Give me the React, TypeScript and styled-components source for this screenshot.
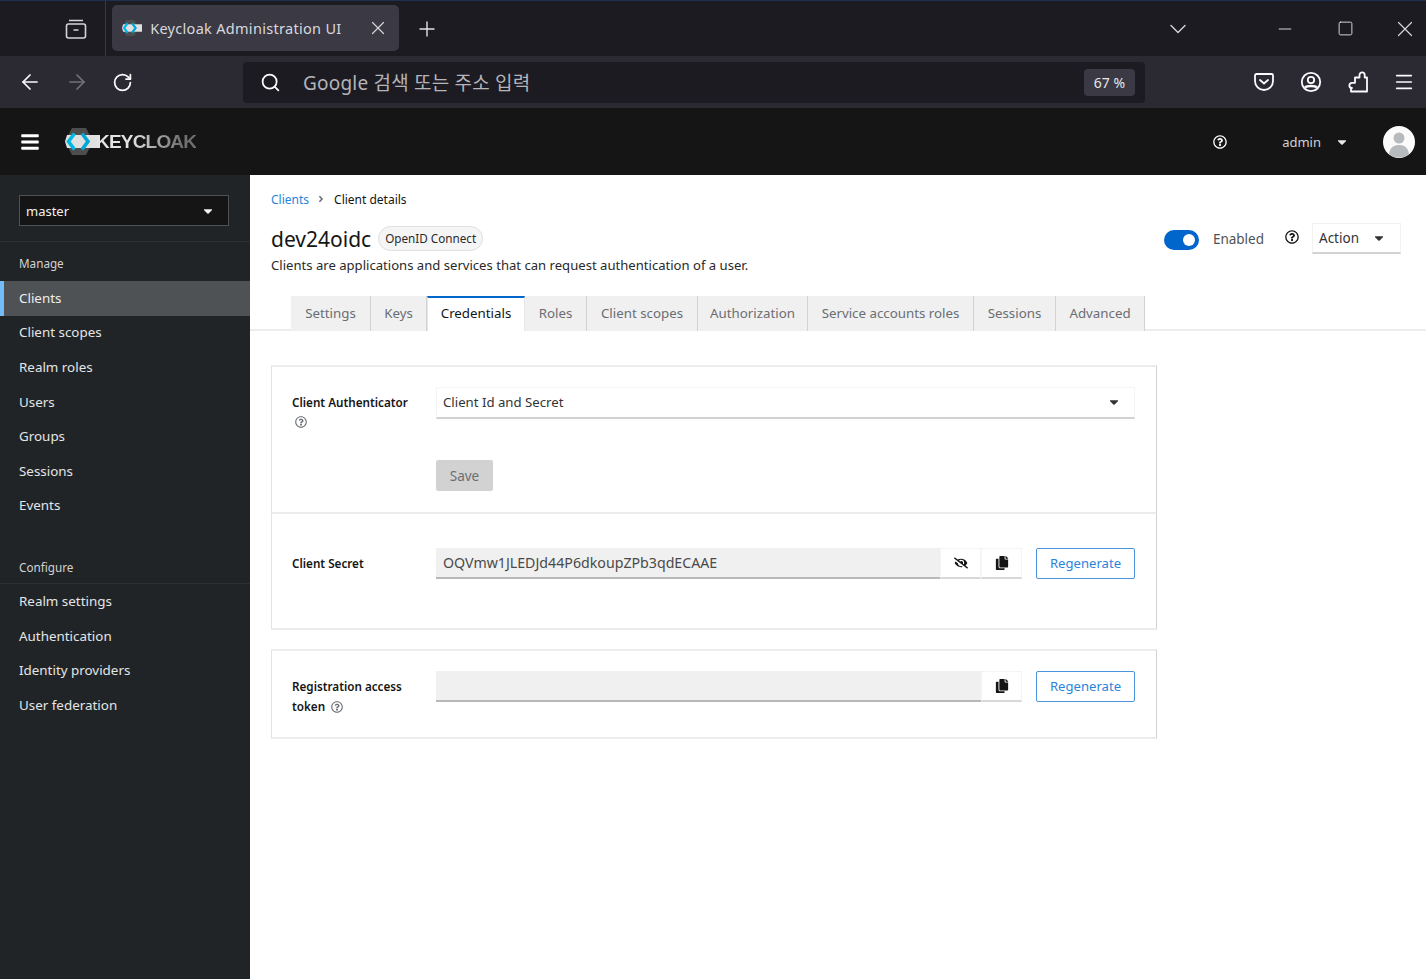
import React from "react";
import styled, { createGlobalStyle } from "styled-components";
import { ArrowLeft, ArrowRight, RotateCw, Search, X, Plus, ChevronDown, Minus, Square, Menu } from "lucide-react";
import { FaBars, FaCaretDown, FaAngleRight, FaRegQuestionCircle, FaEyeSlash, FaCopy } from "react-icons/fa";

const FONT = `"Noto Sans", "Noto Sans CJK KR", sans-serif`;

const GlobalStyle = createGlobalStyle`
  html, body { margin: 0; padding: 0; background: #fff; }
  body { font-family: ${FONT}; overflow: hidden; }
  * { box-sizing: border-box; }
`;

const Page = styled.div`
  width: 1426px;
  height: 979px;
  display: flex;
  flex-direction: column;
  overflow: hidden;
`;

/* browser chrome */
const TabStrip = styled.div`
  height: 56px;
  background: #1c1b22;
  border-top: 1px solid #20304f;
  display: flex;
  align-items: center;
  color: #fbfbfe;
`;
const TabGroupButton = styled.div`
  width: 106px;
  height: 55px;
  padding-left: 65px;
  display: flex;
  align-items: center;
  border-right: 1px solid #3a3944;
`;
const BrowserTab = styled.div`
  width: 287px;
  height: 46px;
  margin: 0 0 2px 6px;
  padding: 0 10px 0 10px;
  border-radius: 5px;
  background: #3a3944;
  display: flex;
  align-items: center;
  color: #d8d8dc;
  font-size: 14.5px;
  letter-spacing: 0.3px;
`;
const TabTitle = styled.span`
  margin-left: 8px;
  flex: 1;
  white-space: nowrap;
`;
const NewTab = styled.div`
  margin-left: 16px;
  display: flex;
`;
const StripRight = styled.div`
  margin-left: auto;
  margin-right: -9px;
  display: flex;
  align-items: center;
  color: #d5d5d8;
`;
const AllTabs = styled.div`
  display: flex;
  margin-right: 63px;
`;
const WindowButton = styled.div`
  width: 60px;
  display: flex;
  justify-content: center;
`;
const Toolbar = styled.div`
  height: 52px;
  background: #2b2a33;
  display: flex;
  align-items: center;
  padding-left: 18px;
  color: #fbfbfe;
`;
const NavButton = styled.div<{ $off?: boolean }>`
  width: 47px;
  display: flex;
  color: ${(p) => (p.$off ? "#73727a" : "#fbfbfe")};
`;
const UrlBar = styled.div`
  width: 902px;
  height: 41px;
  margin-left: 84px;
  padding: 0 10px 0 17px;
  border-radius: 4px;
  background: #1c1b22;
  display: flex;
  align-items: center;
`;
const UrlText = styled.span`
  margin-left: 22px;
  flex: 1;
  color: #b4b4ba;
  font-size: 19px;
  letter-spacing: 0.2px;
`;
const Zoom = styled.span`
  width: 51px;
  height: 27px;
  border-radius: 4px;
  background: #3a3944;
  color: #e6e6ea;
  font-size: 14px;
  display: flex;
  align-items: center;
  justify-content: center;
`;
const ToolIcons = styled.div`
  margin-left: 107px;
  display: flex;
  align-items: center;
  gap: 23px;
`;

/* keycloak masthead */
const Masthead = styled.header`
  height: 67px;
  background: #151515;
  display: flex;
  align-items: center;
  padding: 0 11px 0 20px;
  color: #fff;
`;
const BarsIcon = styled(FaBars)`
  width: 20px;
  height: 20px;
`;
const Logo = styled.div`
  margin-left: 25px;
  display: flex;
  align-items: center;
`;
const LogoText = styled.span`
  margin-left: -3px;
  font-family: "Liberation Sans", sans-serif;
  font-size: 19px;
  font-weight: 700;
  letter-spacing: -0.8px;
  background: linear-gradient(90deg, #e4e4e4 35%, #6f6f6f 85%);
  -webkit-background-clip: text;
  background-clip: text;
  color: transparent;
`;
const MastRight = styled.div`
  margin-left: auto;
  display: flex;
  align-items: center;
`;
const MastHelp = styled(FaRegQuestionCircle)`
  width: 14px;
  height: 14px;
  margin-right: 55px;
`;
const UserName = styled.span`
  color: #d2d2d2;
  font-size: 13px;
`;
const UserCaret = styled(FaCaretDown)`
  width: 14px;
  height: 14px;
  margin: 0 34px 0 14px;
  color: #e8e8e8;
`;
const Avatar = styled.svg`
  width: 32px;
  height: 32px;
  display: block;
`;

const Body = styled.div`
  flex: 1;
  display: flex;
  min-height: 0;
`;

/* sidebar */
const Sidebar = styled.aside`
  width: 250px;
  background: #212427;
  color: #e4e5e6;
  display: flex;
  flex-direction: column;
`;
const RealmWrap = styled.div`
  height: 67px;
  padding: 20px 21px 0 19px;
  border-bottom: 1px solid #2d3033;
`;
const RealmSelect = styled.div`
  height: 31px;
  padding: 0 13px 0 6px;
  background: #151515;
  border: 1px solid #4f5255;
  display: flex;
  align-items: center;
  justify-content: space-between;
  font-size: 13px;
  color: #f0f0f0;
`;
const SectionTitle = styled.div<{ $gap: number; $ruled?: boolean }>`
  height: ${(p) => (p.$ruled ? 30 : 39)}px;
  margin-top: ${(p) => p.$gap}px;
  padding: ${(p) => (p.$ruled ? "4px" : "12px")} 0 0 19px;
  font-size: 11.7px;
  line-height: 18px;
  color: #d2d2d2;
  border-bottom: ${(p) => (p.$ruled ? "1px solid #2d3033" : "none")};
`;
const NavItem = styled.div<{ $active?: boolean }>`
  height: 34.6px;
  padding-bottom: 1px;
  display: flex;
  align-items: center;
  padding-left: ${(p) => (p.$active ? 15 : 19)}px;
  font-size: 13.4px;
  color: ${(p) => (p.$active ? "#eeeeee" : "#e4e5e6")};
  background: ${(p) => (p.$active ? "#4f5255" : "transparent")};
  border-left: ${(p) => (p.$active ? "4px solid #73bcf7" : "none")};
`;

/* main */
const Main = styled.main`
  flex: 1;
  background: #fff;
  color: #151515;
  display: flex;
  flex-direction: column;
`;
const Header = styled.div`
  padding: 15px 25px 0 21px;
`;
const Breadcrumb = styled.nav`
  height: 18px;
  display: flex;
  align-items: center;
  font-size: 12px;
`;
const CrumbLink = styled.span`
  color: #2b84dc;
`;
const CrumbSep = styled(FaAngleRight)`
  width: 10px;
  height: 10px;
  margin: 0 8px 0 7px;
  color: #6a6e73;
`;
const TitleRow = styled.div`
  margin-top: 16px;
  height: 30px;
  display: flex;
  align-items: center;
`;
const Title = styled.h1`
  margin: 0;
  font-size: 21px;
  font-weight: 400;
`;
const Chip = styled.span`
  margin: -2px 0 0 7px;
  height: 25px;
  padding: 0 6px;
  border: 1px solid #e0e0e0;
  border-radius: 13px;
  background: #f5f5f5;
  color: #2a2a2a;
  font-size: 11.7px;
  display: flex;
  align-items: center;
`;
const HeaderActions = styled.div`
  margin-left: auto;
  display: flex;
  align-items: center;
`;
const Toggle = styled.span`
  width: 35px;
  height: 20px;
  margin-top: 2px;
  padding-right: 4px;
  border-radius: 10px;
  background: #0066cc;
  display: flex;
  align-items: center;
  justify-content: flex-end;
  &::after {
    content: "";
    width: 12px;
    height: 12px;
    border-radius: 50%;
    background: #fff;
  }
`;
const ToggleLabel = styled.span`
  margin: 0 21px 0 14px;
  color: #4f5255;
  font-size: 13.5px;
`;
const ActionHelp = styled(FaRegQuestionCircle)`
  width: 14px;
  height: 14px;
  margin: -5px 13px 0 0;
`;
const ActionSelect = styled.div`
  width: 89px;
  height: 31px;
  padding: 0 14px 0 6px;
  margin-top: -2px;
  display: flex;
  align-items: center;
  justify-content: space-between;
  font-size: 13.5px;
  color: #333;
  border: 1px solid #f2f2f2;
  border-bottom: 2px solid #d2d2d2;
`;
const Description = styled.p`
  margin: 1px 0 0;
  height: 20px;
  font-size: 13.1px;
  line-height: 20px;
  color: #2a2a2a;
`;
const Tabs = styled.div`
  margin-top: 21px;
  height: 35px;
  padding-left: 41px;
  display: flex;
  border-bottom: 2px solid #ececec;
`;
const Tab = styled.div<{ $w: number; $active?: boolean }>`
  width: ${(p) => p.$w}px;
  height: 35px;
  padding-bottom: ${(p) => (p.$active ? 3 : 1)}px;
  display: flex;
  align-items: center;
  justify-content: center;
  font-size: 13.3px;
  color: ${(p) => (p.$active ? "#151515" : "#6a6e73")};
  background: ${(p) => (p.$active ? "#fff" : "#f0f0f0")};
  border-right: 1px solid ${(p) => (p.$active ? "#e6e6e6" : "#d2d2d2")};
  border-left: ${(p) => (p.$active ? "1px solid #e6e6e6" : "none")};
  border-top: ${(p) => (p.$active ? "2px solid #0066cc" : "none")};
`;
const Cards = styled.div`
  width: 886px;
  margin: 34px 0 0 21px;
  display: flex;
  flex-direction: column;
`;
const Card = styled.section<{ $h: number; $top?: number; $noTop?: boolean }>`
  height: ${(p) => p.$h}px;
  margin-top: ${(p) => p.$top ?? 0}px;
  padding: 20px 21px 0 20px;
  display: grid;
  grid-template-columns: 144px 1fr;
  align-content: start;
  border: 1px solid #e4e4e4;
  border-top: ${(p) => (p.$noTop ? "none" : "2px solid #ececec")};
  border-right: 1px solid #d2d2d2;
  border-bottom: 2px solid #ececec;
`;
const Label = styled.div<{ $top: number }>`
  margin-top: ${(p) => p.$top}px;
  font-size: 11.7px;
  line-height: 20px;
  font-weight: 600;
  color: #151515;
`;
const LabelHelp = styled(FaRegQuestionCircle)<{ $block?: boolean }>`
  width: 12px;
  height: 12px;
  color: #6a6e73;
  display: ${(p) => (p.$block ? "block" : "inline-block")};
  margin: ${(p) => (p.$block ? "4px 0 0 3px" : "0 0 -2px 6px")};
`;
const Select = styled.div`
  height: 32px;
  padding: 0 13px 2px 6px;
  display: flex;
  align-items: center;
  justify-content: space-between;
  font-size: 13.2px;
  color: #333;
  border: 1px solid #f4f4f4;
  border-bottom: 2px solid #d2d2d2;
`;
const SaveButton = styled.div`
  grid-column: 2;
  width: 57px;
  height: 31px;
  margin-top: 32px;
  border-radius: 2px;
  background: #d2d2d2;
  color: #6a6e73;
  font-size: 13.5px;
  display: flex;
  align-items: center;
  justify-content: center;
`;
const FieldRow = styled.div<{ $offset: number }>`
  display: flex;
  margin-top: ${(p) => p.$offset}px;
`;
const FieldGroup = styled.div`
  width: 586px;
  height: 31px;
  display: flex;
  margin-right: 14px;
`;
const FieldInput = styled.div`
  flex: 1;
  padding: 0 0 1px 7px;
  display: flex;
  align-items: center;
  background: #f0f0f0;
  border-bottom: 2px solid #b8b8b8;
  color: #4a4a4a;
  font-size: 14.2px;
`;
const IconButton = styled.div`
  width: 41px;
  display: flex;
  align-items: center;
  justify-content: center;
  color: #151515;
  border: 1px solid #f4f4f4;
  border-bottom: 2px solid #d8d8d8;
`;
const OutlineButton = styled.div`
  width: 99px;
  height: 31px;
  padding-bottom: 2px;
  border: 1px solid #4a94dc;
  border-radius: 2px;
  color: #2b84dc;
  font-size: 13.1px;
  display: flex;
  align-items: center;
  justify-content: center;
`;

const KeycloakMark: React.FC<{ size: number }> = ({ size }) => (
  <svg width={(size * 34) / 27} height={size} viewBox="0 0 34 27" fill="none">
    <path d="M0 13.5L7 0h14l7 13.5L21 27H7z" fill="#4d4d4d" />
    <path d="M2 7h32v13H2L0 13.5z" fill="#e0e0e0" />
    <path d="M9.5 5.5L3.5 13.5l6 8" stroke="#00b8e3" strokeWidth="3.6" />
    <path d="M17 5.5l6 8-6 8" stroke="#00a6d6" strokeWidth="3.6" />
  </svg>
);

const navManage = ["Clients", "Client scopes", "Realm roles", "Users", "Groups", "Sessions", "Events"];
const navConfigure = ["Realm settings", "Authentication", "Identity providers", "User federation"];
const tabs: [string, number][] = [
  ["Settings", 80], ["Keys", 56], ["Credentials", 98], ["Roles", 62], ["Client scopes", 111],
  ["Authorization", 110], ["Service accounts roles", 166], ["Sessions", 82], ["Advanced", 89],
];

const App: React.FC = () => (
  <Page>
    <GlobalStyle />
    <TabStrip>
      <TabGroupButton>
        <svg width="22" height="22" viewBox="0 0 22 22" fill="none" stroke="#d5d5d8" strokeWidth="1.6">
          <rect x="1.5" y="6" width="19" height="14" rx="2" />
          <path d="M4 2.5h14M8.5 12h5" />
        </svg>
      </TabGroupButton>
      <BrowserTab>
        <KeycloakMark size={16} />
        <TabTitle>Keycloak Administration UI</TabTitle>
        <X size={22} strokeWidth={1.3} color="#d5d5d8" />
      </BrowserTab>
      <NewTab><Plus size={24} strokeWidth={1.4} color="#e4e4e6" /></NewTab>
      <StripRight>
        <AllTabs><ChevronDown size={28} strokeWidth={1.2} /></AllTabs>
        <WindowButton><Minus size={20} strokeWidth={1.2} /></WindowButton>
        <WindowButton><Square size={17} strokeWidth={1.4} /></WindowButton>
        <WindowButton><X size={26} strokeWidth={1.1} /></WindowButton>
      </StripRight>
    </TabStrip>
    <Toolbar>
      <NavButton><ArrowLeft size={24} strokeWidth={1.7} /></NavButton>
      <NavButton $off><ArrowRight size={24} strokeWidth={1.7} /></NavButton>
      <NavButton><RotateCw size={21} strokeWidth={2} /></NavButton>
      <UrlBar>
        <Search size={21} strokeWidth={2} color="#fbfbfe" />
        <UrlText>Google 검색 또는 주소 입력</UrlText>
        <Zoom>67 %</Zoom>
      </UrlBar>
      <ToolIcons>
        <svg width="24" height="24" viewBox="0 0 24 24" fill="none" stroke="#fbfbfe" strokeWidth="1.8">
          <path d="M4.5 4h15A1.5 1.5 0 0 1 21 5.5V11a9 9 0 0 1-18 0V5.5A1.5 1.5 0 0 1 4.5 4z" />
          <path d="M8 10l4 3.5 4-3.5" strokeLinecap="round" />
        </svg>
        <svg width="24" height="24" viewBox="0 0 24 24" fill="none" stroke="#fbfbfe" strokeWidth="1.8">
          <circle cx="12" cy="12" r="9.2" />
          <circle cx="12" cy="10" r="3.2" />
          <path d="M6 17.5c2-2 10-2 12 0" strokeWidth="2.4" />
        </svg>
        <svg width="24" height="24" viewBox="0 0 24 24" fill="none" stroke="#fbfbfe" strokeWidth="1.8" strokeLinejoin="round">
          <path d="M9 7.5h4.5V5a2.6 2.6 0 0 1 5.2 0v2.5H21v14H5V18h1a2.6 2.6 0 0 1 0-5.2h3z" />
        </svg>
        <Menu size={22} strokeWidth={1.8} />
      </ToolIcons>
    </Toolbar>
    <Masthead>
      <BarsIcon />
      <Logo>
        <KeycloakMark size={27} />
        <LogoText>KEYCLOAK</LogoText>
      </Logo>
      <MastRight>
        <MastHelp />
        <UserName>admin</UserName>
        <UserCaret />
        <Avatar viewBox="0 0 32 32">
          <circle cx="16" cy="16" r="16" fill="#fbfbfb" />
          <circle cx="16" cy="12" r="5.5" fill="#b8bbbe" />
          <path d="M6 28c1-7 5-9 10-9s9 2 10 9a16 16 0 0 1-20 0z" fill="#b8bbbe" />
        </Avatar>
      </MastRight>
    </Masthead>
    <Body>
      <Sidebar>
        <RealmWrap>
          <RealmSelect>
            master
            <FaCaretDown size={14} />
          </RealmSelect>
        </RealmWrap>
        <SectionTitle $gap={0}>Manage</SectionTitle>
        {navManage.map((item) => (
          <NavItem key={item} $active={item === "Clients"}>{item}</NavItem>
        ))}
        <SectionTitle $gap={31} $ruled>Configure</SectionTitle>
        {navConfigure.map((item) => (
          <NavItem key={item}>{item}</NavItem>
        ))}
      </Sidebar>
      <Main>
        <Header>
          <Breadcrumb>
            <CrumbLink>Clients</CrumbLink>
            <CrumbSep />
            Client details
          </Breadcrumb>
          <TitleRow>
            <Title>dev24oidc</Title>
            <Chip>OpenID Connect</Chip>
            <HeaderActions>
              <Toggle />
              <ToggleLabel>Enabled</ToggleLabel>
              <ActionHelp />
              <ActionSelect>
                Action
                <FaCaretDown size={14} />
              </ActionSelect>
            </HeaderActions>
          </TitleRow>
          <Description>Clients are applications and services that can request authentication of a user.</Description>
        </Header>
        <Tabs>
          {tabs.map(([name, w]) => (
            <Tab key={name} $w={w} $active={name === "Credentials"}>{name}</Tab>
          ))}
        </Tabs>
        <Cards>
          <Card $h={149}>
            <Label $top={5}>
              Client Authenticator
              <LabelHelp $block />
            </Label>
            <Select>
              Client Id and Secret
              <FaCaretDown size={14} />
            </Select>
            <SaveButton>Save</SaveButton>
          </Card>
          <Card $h={116} $noTop>
            <Label $top={19}>Client Secret</Label>
            <FieldRow $offset={14}>
              <FieldGroup>
                <FieldInput>OQVmw1JLEDJd44P6dkoupZPb3qdECAAE</FieldInput>
                <IconButton><FaEyeSlash size={14} /></IconButton>
                <IconButton><FaCopy size={14} /></IconButton>
              </FieldGroup>
              <OutlineButton>Regenerate</OutlineButton>
            </FieldRow>
          </Card>
          <Card $h={90} $top={19}>
            <Label $top={5}>
              Registration access
              <br />
              token
              <LabelHelp />
            </Label>
            <FieldRow $offset={0}>
              <FieldGroup>
                <FieldInput />
                <IconButton><FaCopy size={14} /></IconButton>
              </FieldGroup>
              <OutlineButton>Regenerate</OutlineButton>
            </FieldRow>
          </Card>
        </Cards>
      </Main>
    </Body>
  </Page>
);

export default App;
